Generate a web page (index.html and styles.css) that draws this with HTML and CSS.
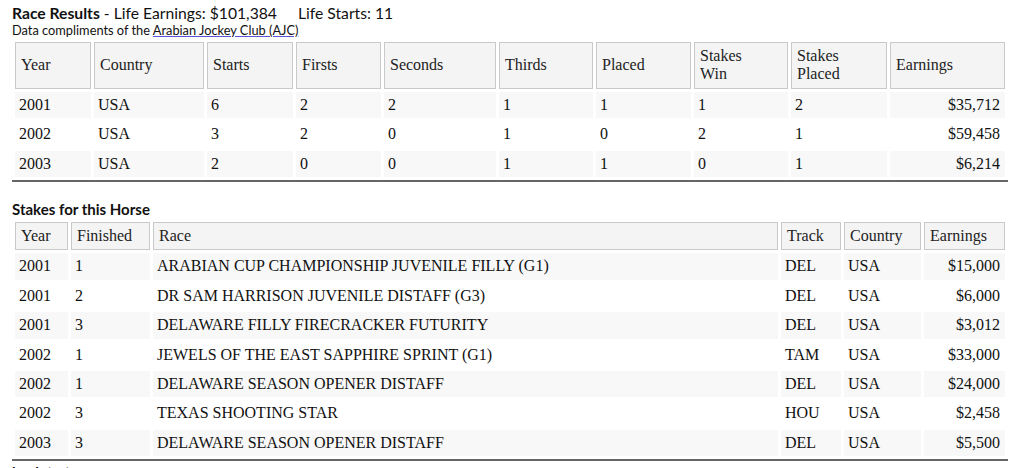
FILE: index.html
```html
<!DOCTYPE html>
<html>
<head>
<meta charset="utf-8">
<link rel="stylesheet" href="styles.css">
</head>
<body>
<div class="page">
  <div class="title"><b>Race Results</b> - Life Earnings: $101,384<span class="gap">Life Starts: 11</span></div>
  <div class="credit">Data compliments of the <a href="#">Arabian Jockey Club (AJC)</a></div>

  <table class="grid results">
    <thead>
      <tr>
        <th class="c-year">Year</th>
        <th class="c-country">Country</th>
        <th class="c-starts">Starts</th>
        <th class="c-firsts">Firsts</th>
        <th class="c-seconds">Seconds</th>
        <th class="c-thirds">Thirds</th>
        <th class="c-placed">Placed</th>
        <th class="c-swin">Stakes<br>Win</th>
        <th class="c-splaced">Stakes<br>Placed</th>
        <th class="c-earn">Earnings</th>
      </tr>
    </thead>
    <tbody>
      <tr><td>2001</td><td>USA</td><td>6</td><td>2</td><td>2</td><td>1</td><td>1</td><td>1</td><td>2</td><td class="num">$35,712</td></tr>
      <tr><td>2002</td><td>USA</td><td>3</td><td>2</td><td>0</td><td>1</td><td>0</td><td>2</td><td>1</td><td class="num">$59,458</td></tr>
      <tr><td>2003</td><td>USA</td><td>2</td><td>0</td><td>0</td><td>1</td><td>1</td><td>0</td><td>1</td><td class="num">$6,214</td></tr>
    </tbody>
  </table>

  <h3 class="section">Stakes for this Horse</h3>
  <table class="grid stakes">
    <thead>
      <tr>
        <th class="s-year">Year</th>
        <th class="s-fin">Finished</th>
        <th class="s-race">Race</th>
        <th class="s-track">Track</th>
        <th class="s-country">Country</th>
        <th class="s-earn">Earnings</th>
      </tr>
    </thead>
    <tbody>
      <tr><td>2001</td><td>1</td><td>ARABIAN CUP CHAMPIONSHIP JUVENILE FILLY (G1)</td><td>DEL</td><td>USA</td><td class="num">$15,000</td></tr>
      <tr><td>2001</td><td>2</td><td>DR SAM HARRISON JUVENILE DISTAFF (G3)</td><td>DEL</td><td>USA</td><td class="num">$6,000</td></tr>
      <tr><td>2001</td><td>3</td><td>DELAWARE FILLY FIRECRACKER FUTURITY</td><td>DEL</td><td>USA</td><td class="num">$3,012</td></tr>
      <tr><td>2002</td><td>1</td><td>JEWELS OF THE EAST SAPPHIRE SPRINT (G1)</td><td>TAM</td><td>USA</td><td class="num">$33,000</td></tr>
      <tr><td>2002</td><td>1</td><td>DELAWARE SEASON OPENER DISTAFF</td><td>DEL</td><td>USA</td><td class="num">$24,000</td></tr>
      <tr><td>2002</td><td>3</td><td>TEXAS SHOOTING STAR</td><td>HOU</td><td>USA</td><td class="num">$2,458</td></tr>
      <tr><td>2003</td><td>3</td><td>DELAWARE SEASON OPENER DISTAFF</td><td>DEL</td><td>USA</td><td class="num">$5,500</td></tr>
    </tbody>
  </table>
  <div class="after">back to top</div>
</div>
</body>
</html>
```

FILE: styles.css
```css
html, body {
  margin: 0;
  padding: 0;
  background: #ffffff;
}

.page {
  padding: 4px 12px 0 12px;
  font-family: Lato, "Open Sans", sans-serif;
  color: #111;
}

.title {
  font-size: 15.7px;
  line-height: 18px;
  height: 18px;
}

.title b {
  font-weight: 700;
}

.title .gap {
  margin-left: 21px;
}

.credit {
  font-size: 12.8px;
  line-height: 16px;
  height: 16px;
  margin-bottom: 1px;
}

.credit a {
  color: #111;
  text-decoration: underline;
  text-decoration-color: #5a52d9;
}

.grid {
  width: 996px;
  table-layout: fixed;
  border-collapse: separate;
  border-spacing: 3px;
  border-bottom: 2px solid #666;
  font-family: "Liberation Serif", "Times New Roman", serif;
  font-size: 16px;
  line-height: 18.4px;
  color: #111;
}

.grid th,
.grid td {
  box-sizing: border-box;
  text-align: left;
  vertical-align: middle;
  white-space: nowrap;
}

.grid th {
  font-weight: normal;
  color: #222;
  background: #f4f4f4;
  border: 1px solid #c9c9c9;
  padding: 4px 4px 4px 5px;
}

.grid td {
  padding: 4px 4px;
}

.grid tbody tr:nth-child(odd) td {
  background: #f8f8f8;
}

.grid td.num {
  text-align: right;
  padding-right: 5px;
}

/* results column widths (border-box) */
.c-year { width: 76px; }
.c-country { width: 110px; }
.c-starts { width: 86px; }
.c-firsts { width: 85px; }
.c-seconds { width: 112px; }
.c-thirds { width: 94px; }
.c-placed { width: 95px; }
.c-swin { width: 94px; }
.c-splaced { width: 96px; }
.c-earn { width: 115px; }

.section {
  margin: 18px 0 1px 0;
  font-size: 15px;
  line-height: 18px;
  font-weight: 700;
}

/* stakes column widths (border-box) */
.s-year { width: 53px; }
.s-fin { width: 79px; }
.s-race { width: 625px; }
.s-track { width: 60px; }
.s-country { width: 77px; }
.s-earn { width: 81px; }

.after {
  margin-top: 2px;
  font-size: 15px;
  line-height: 18px;
  font-weight: 700;
}
```
